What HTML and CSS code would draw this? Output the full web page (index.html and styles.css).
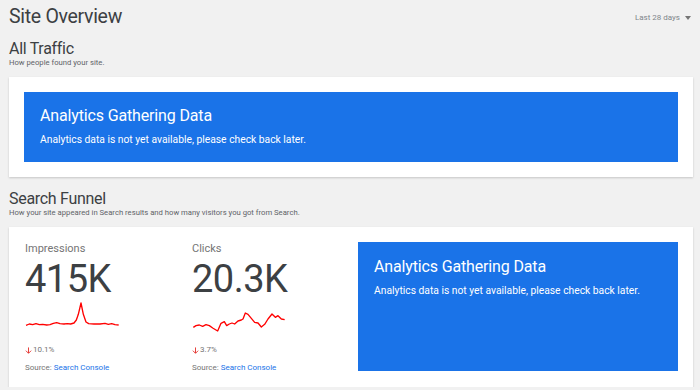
FILE: index.html
```html
<!DOCTYPE html>
<html lang="en">
<head>
<meta charset="utf-8">
<title>Site Overview</title>
<link rel="stylesheet" href="styles.css">
</head>
<body>
<div class="page">
  <header class="top">
    <h1 class="page-title">Site Overview</h1>
    <div class="range">Last 28 days <span class="caret"></span></div>
  </header>

  <section class="section">
    <h2 class="section-title">All Traffic</h2>
    <p class="section-sub">How people found your site.</p>
    <div class="card card-traffic">
      <div class="notice notice-wide">
        <h3 class="notice-title">Analytics Gathering Data</h3>
        <p class="notice-text">Analytics data is not yet available, please check back later.</p>
      </div>
    </div>
  </section>

  <section class="section section-funnel">
    <h2 class="section-title">Search Funnel</h2>
    <p class="section-sub">How your site appeared in Search results and how many visitors you got from Search.</p>
    <div class="card card-funnel">
      <div class="metric">
        <div class="metric-label">Impressions</div>
        <div class="metric-value">415K</div>
        <svg class="spark" viewBox="75 222 285 96" width="95" height="32">
          <polyline fill="none" stroke="#ff0000" stroke-width="4" stroke-linejoin="round" points="78,295 88,291 98,293 108,290 118,293 128,292 140,294 150,293 160,289 170,287 180,290 192,291 202,290 212,291 222,288 229,279 235,262 243,228 250,262 258,285 266,290 282,291 300,291 315,289 325,292 335,290 345,293 356,294"/>
        </svg>
        <div class="delta"><svg class="arrow" viewBox="0 0 8 8" width="7" height="7"><path d="M4 0.5V7M1 4.2L4 7.2L7 4.2" fill="none" stroke="#e53935" stroke-width="1.1"/></svg>10.1%</div>
        <div class="source">Source: <a class="link">Search Console</a></div>
      </div>
      <div class="metric">
        <div class="metric-label">Clicks</div>
        <div class="metric-value">20.3K</div>
        <svg class="spark" viewBox="68 216 285 96" width="95" height="32">
          <polyline fill="none" stroke="#ff0000" stroke-width="4" stroke-linejoin="round" points="72,295 80,290 90,288 100,292 110,287 120,290 130,297 145,306 155,283 165,278 172,290 180,285 188,282 196,285 206,276 216,273 221,270 228,252 236,256 246,268 256,280 266,282 276,294 286,286 296,270 308,255 318,265 326,260 336,270 346,272"/>
        </svg>
        <div class="delta"><svg class="arrow" viewBox="0 0 8 8" width="7" height="7"><path d="M4 0.5V7M1 4.2L4 7.2L7 4.2" fill="none" stroke="#e53935" stroke-width="1.1"/></svg>3.7%</div>
        <div class="source">Source: <a class="link">Search Console</a></div>
      </div>
      <div class="notice notice-tall">
        <h3 class="notice-title">Analytics Gathering Data</h3>
        <p class="notice-text">Analytics data is not yet available, please check back later.</p>
      </div>
    </div>
  </section>
</div>
</body>
</html>
```

FILE: styles.css
```css
html, body {
  margin: 0;
  padding: 0;
  background: #f1f1f1;
}

body {
  font-family: Roboto, "Liberation Sans", sans-serif;
  color: #3c4043;
}

.page {
  padding: 0 7px 0 9px;
}

.top {
  display: flex;
  justify-content: space-between;
  align-items: flex-start;
  padding-top: 5px;
}

.page-title {
  margin: 0;
  font-size: 19.5px;
  line-height: 24px;
  font-weight: 400;
  letter-spacing: -0.3px;
  color: #3c4043;
}

.range {
  display: flex;
  align-items: center;
  gap: 5px;
  margin-top: 8px;
  margin-right: 2px;
  font-size: 8px;
  line-height: 10px;
  color: #80868b;
}

.caret {
  width: 0;
  height: 0;
  border-left: 3.5px solid transparent;
  border-right: 3.5px solid transparent;
  border-top: 4px solid #757575;
}

.section {
  margin-top: 10px;
}

.section-title {
  margin: 0;
  font-size: 16px;
  line-height: 20px;
  font-weight: 400;
  letter-spacing: -0.3px;
  color: #3c4043;
}

.section-sub {
  margin: -1px 0 0;
  font-size: 7.7px;
  line-height: 10px;
  color: #5f6368;
}

.card {
  background: #fff;
  box-shadow: 0 1px 2px rgba(0, 0, 0, 0.18);
  margin-top: 9px;
}

.card-traffic {
  padding: 15px;
}

.notice {
  background: #1a73e8;
  color: #fff;
  padding: 14px 16px;
  box-sizing: border-box;
}

.notice-wide {
  height: 70px;
}

.notice-title {
  margin: 0;
  font-size: 16px;
  line-height: 20px;
  font-weight: 400;
  letter-spacing: -0.15px;
}

.notice-text {
  margin: 7px 0 0;
  font-size: 10.3px;
  line-height: 13px;
}

.section-funnel {
  margin-top: 12px;
}

.card-funnel {
  display: grid;
  grid-template-columns: 167px 166px 1fr;
  padding: 15px 15px 14px 16px;
}

.metric-label {
  font-size: 11px;
  line-height: 14px;
  color: #757575;
}

.metric-value {
  margin-top: 3px;
  font-size: 38px;
  line-height: 40px;
  color: #3c4043;
  letter-spacing: -0.5px;
}

.spark {
  display: block;
  margin-top: 2px;
}

.delta {
  display: flex;
  align-items: center;
  gap: 1px;
  margin-top: 12px;
  font-size: 8px;
  line-height: 10px;
  color: #757575;
}

.arrow {
  display: block;
}

.source {
  margin-top: 8px;
  font-size: 8px;
  line-height: 10px;
  color: #757575;
}

.link {
  color: #1a73e8;
}

.notice-tall {
  height: 129px;
  padding-top: 15px;
}
```
